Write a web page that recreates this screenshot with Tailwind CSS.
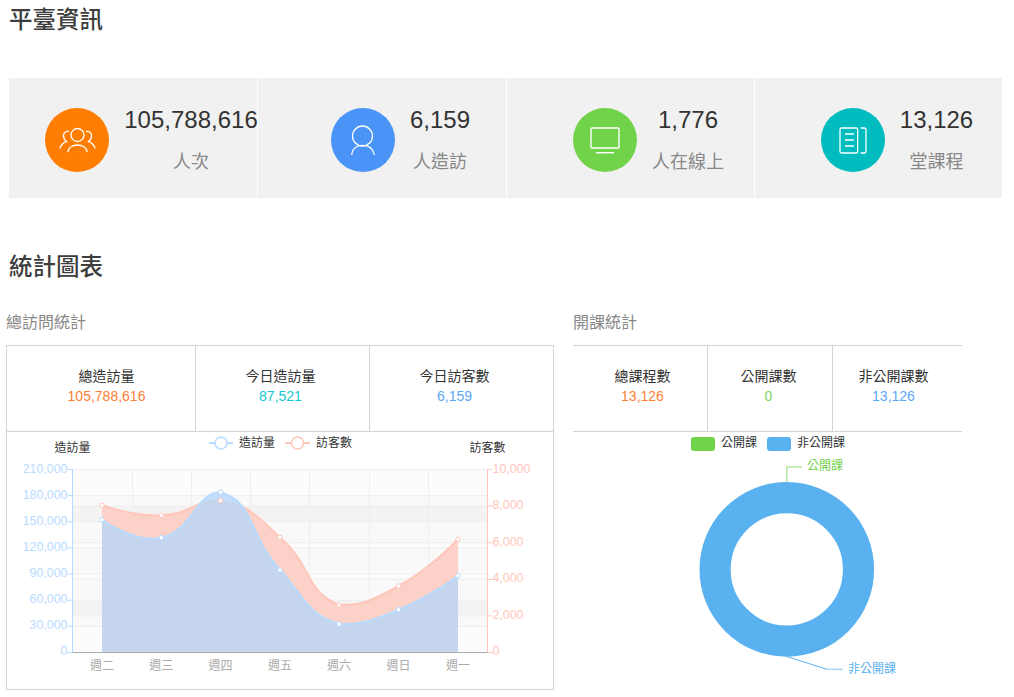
<!DOCTYPE html>
<html lang="zh-Hant">
<head>
<meta charset="utf-8">
<script src="https://cdn.jsdelivr.net/npm/@tailwindcss/browser@4"></script>
<title>平臺資訊</title>
</head>
<body class="bg-white overflow-hidden [font-family:'Liberation_Sans','Noto_Sans_CJK_TC',sans-serif]">
<div class="w-[1014px] h-[697px] overflow-hidden">
  <h2 class="pl-[9px] text-[23.5px] leading-10 font-medium text-[#3d3d3d]">平臺資訊</h2>

  <div class="mt-[38px] ml-[9px] w-[993px] h-[120px] grid grid-cols-[248px_248px_247px_247px] gap-px">
    <div class="bg-[#f1f1f1] flex justify-center items-start pt-[30px] pl-[37px]">
      <div class="w-16 h-16 shrink-0 rounded-full bg-[#ff7d00]">
        <svg viewBox="0 0 64 64" class="w-16 h-16" fill="none" stroke="#fff" stroke-width="1.3" stroke-linecap="round">
          <circle cx="32.5" cy="27" r="6.5"/>
          <path d="M23 43.7C23.5 39.5 27.5 37 32.5 37S41.5 39.5 42 43.7"/>
          <path d="M23.5 23.5C20.5 23 18.5 25 18.5 27.5C18.5 30 19.5 32 21.5 33.5C18 34.5 16 37 15 40"/>
          <path d="M41.5 23.5C44.5 23 46.5 25 46.5 27.5C46.5 30 45.5 32 43.5 33.5C47 34.5 49 37 50 40"/>
        </svg>
      </div>
      <div class="ml-[15px] shrink-0 flex flex-col items-center">
        <div class="text-2xl leading-6 text-[#333]">105,788,616</div>
        <div class="mt-[18px] text-lg leading-6 text-[#888]">人次</div>
      </div>
    </div>
    <div class="bg-[#f1f1f1] flex justify-center items-start pt-[30px] pl-[37px]">
      <div class="w-16 h-16 shrink-0 rounded-full bg-[#4a94f8]">
        <svg viewBox="0 0 64 64" class="w-16 h-16" fill="none" stroke="#fff" stroke-width="1.3" stroke-linecap="round">
          <circle cx="31.5" cy="28" r="10"/>
          <path d="M20.7 46.3C21.5 40.5 26 37.3 31.7 37.3S41.8 40.5 43.3 46.3"/>
        </svg>
      </div>
      <div class="ml-[15px] shrink-0 flex flex-col items-center">
        <div class="text-2xl leading-6 text-[#333]">6,159</div>
        <div class="mt-[18px] text-lg leading-6 text-[#888]">人造訪</div>
      </div>
    </div>
    <div class="bg-[#f1f1f1] flex justify-center items-start pt-[30px] pl-9">
      <div class="w-16 h-16 shrink-0 rounded-full bg-[#71d34a]">
        <svg viewBox="0 0 64 64" class="w-16 h-16" fill="none" stroke="#fff" stroke-width="1.4">
          <rect x="18" y="20" width="28" height="20" rx="1"/>
          <path d="M23 44.7H41"/>
        </svg>
      </div>
      <div class="ml-[15px] shrink-0 flex flex-col items-center">
        <div class="text-2xl leading-6 text-[#333]">1,776</div>
        <div class="mt-[18px] text-lg leading-6 text-[#888]">人在線上</div>
      </div>
    </div>
    <div class="bg-[#f1f1f1] flex justify-center items-start pt-[30px] pl-[37px]">
      <div class="w-16 h-16 shrink-0 rounded-full bg-[#00bcbf]">
        <svg viewBox="0 0 64 64" class="w-16 h-16" fill="none" stroke="#fff" stroke-width="1.3">
          <rect x="19" y="20" width="17.7" height="25" rx="1.5"/>
          <path d="M24 26H33M24 32H33M24 38H33"/>
          <path d="M39.7 20H43a2 2 0 0 1 2 2V43a2 2 0 0 1-2 2H39.7"/>
        </svg>
      </div>
      <div class="ml-[15px] shrink-0 flex flex-col items-center">
        <div class="text-2xl leading-6 text-[#333]">13,126</div>
        <div class="mt-[18px] text-lg leading-6 text-[#888]">堂課程</div>
      </div>
    </div>
  </div>

  <h2 class="mt-[49px] pl-[9px] text-[23.5px] leading-10 font-medium text-[#3d3d3d]">統計圖表</h2>

  <div class="mt-6 flex items-start pl-1.5">
    <section class="w-[548px] shrink-0">
      <h3 class="text-base leading-6 text-[#888]">總訪問統計</h3>
      <div class="mt-2.5 h-[345px] border border-[#d4d4d4]">
        <div class="flex h-[86px] border-b border-[#d4d4d4] text-sm leading-5 text-center">
          <div class="w-[189px] pl-[11px] pt-5 border-r border-[#d4d4d4]"><div class="text-[#333]">總造訪量</div><div class="text-[#ff8033]">105,788,616</div></div>
          <div class="w-[174px] pr-1 pt-5 border-r border-[#d4d4d4]"><div class="text-[#333]">今日造訪量</div><div class="text-[#13c8d0]">87,521</div></div>
          <div class="flex-1 pr-3.5 pt-5"><div class="text-[#333]">今日訪客數</div><div class="text-[#5aa9f7]">6,159</div></div>
        </div>
        <svg viewBox="7 432 546 257" class="block w-[546px] h-[257px] text-xs">
          <!-- legend -->
          <path d="M209 443H233" stroke="#b7daff" stroke-width="2"/>
          <circle cx="221" cy="443" r="6" fill="#fff" stroke="#b7daff" stroke-width="1.5"/>
          <text x="239" y="442.5" dominant-baseline="central" class="fill-[#333]">造訪量</text>
          <path d="M285 443H310" stroke="#ffc6ba" stroke-width="2"/>
          <circle cx="297.5" cy="443" r="6" fill="#fff" stroke="#ffc6ba" stroke-width="1.5"/>
          <text x="316" y="442.5" dominant-baseline="central" class="fill-[#333]">訪客數</text>
          <text x="72.5" y="447.5" text-anchor="middle" dominant-baseline="central" class="fill-[#333]">造訪量</text>
          <text x="487.5" y="447.5" text-anchor="middle" dominant-baseline="central" class="fill-[#333]">訪客數</text>

          <!-- split areas -->
          <g fill="#c8c8c8" fill-opacity=".11">
            <rect x="72.5" y="495.6" width="415" height="26.2"/>
            <rect x="72.5" y="547.9" width="415" height="26.1"/>
            <rect x="72.5" y="600.2" width="415" height="26.1"/>
            <rect x="72.5" y="506.1" width="415" height="36.6"/>
            <rect x="72.5" y="579.3" width="415" height="36.6"/>
          </g>
          <g fill="#f8f8f8" fill-opacity=".35">
            <rect x="72.5" y="469.5" width="415" height="26.1"/>
            <rect x="72.5" y="521.8" width="415" height="26.1"/>
            <rect x="72.5" y="574" width="415" height="26.2"/>
            <rect x="72.5" y="626.3" width="415" height="26.2"/>
            <rect x="72.5" y="469.5" width="415" height="36.6"/>
            <rect x="72.5" y="542.7" width="415" height="36.6"/>
            <rect x="72.5" y="615.9" width="415" height="36.6"/>
          </g>
          <!-- split lines -->
          <path d="M72.5 469.5H487.5M72.5 495.6H487.5M72.5 521.8H487.5M72.5 547.9H487.5M72.5 574H487.5M72.5 600.2H487.5M72.5 626.3H487.5M72.5 506.1H487.5M72.5 542.7H487.5M72.5 579.3H487.5M72.5 615.9H487.5M132.5 469.5V652.5M191.5 469.5V652.5M250.5 469.5V652.5M309.5 469.5V652.5M369.5 469.5V652.5M428.5 469.5V652.5" fill="none" stroke="#eeeeee"/>

          <!-- visitors series -->
          <path d="M102 505.3C102 505.3 131.9 516.4 161.3 515.3C191.2 514.1 192.9 500.7 220.6 500.7C252.2 506.6 254.1 514.5 280 537.3C313.3 566.7 304.1 590.7 339 605C363.4 605 371.6 600.9 398.6 586C431.1 568 458 539.3 458 539.3V652.5H102Z" fill="#fcd1c7"/>
          <path d="M102 505.3C102 505.3 131.9 516.4 161.3 515.3C191.2 514.1 192.9 500.7 220.6 500.7C252.2 506.6 254.1 514.5 280 537.3C313.3 566.7 304.1 590.7 339 605C363.4 605 371.6 600.9 398.6 586C431.1 568 458 539.3 458 539.3" fill="none" stroke="#ffc6ba" stroke-width="2"/>
          <!-- views series -->
          <path d="M102 519.7C102 519.7 134.4 543.9 161.3 537.7C193.7 530.2 194.9 492.3 220.6 492.3C254.3 501.5 247.4 533.8 280 570C306.6 599.6 305.4 612.8 339 624C364.7 624 370.5 621.1 398.6 609.7C430 597 458 575.7 458 575.7V652.5H102Z" fill="#b7d6f8" fill-opacity=".8"/>
          <path d="M102 519.7C102 519.7 134.4 543.9 161.3 537.7C193.7 530.2 194.9 492.3 220.6 492.3C254.3 501.5 247.4 533.8 280 570C306.6 599.6 305.4 612.8 339 624C364.7 624 370.5 621.1 398.6 609.7C430 597 458 575.7 458 575.7" fill="none" stroke="#b7daff" stroke-width="2"/>
          <!-- points -->
          <g fill="#fff" stroke="#ffc6ba">
            <circle cx="102" cy="505.3" r="2.2"/><circle cx="161.3" cy="515.3" r="2.2"/><circle cx="220.6" cy="500.7" r="2.2"/><circle cx="280" cy="537.3" r="2.2"/><circle cx="339" cy="605" r="2.2"/><circle cx="398.6" cy="586" r="2.2"/><circle cx="458" cy="539.3" r="2.2"/>
          </g>
          <g fill="#fff" stroke="#b7daff">
            <circle cx="102" cy="519.7" r="2.2"/><circle cx="161.3" cy="537.7" r="2.2"/><circle cx="220.6" cy="492.3" r="2.2"/><circle cx="280" cy="570" r="2.2"/><circle cx="339" cy="624" r="2.2"/><circle cx="398.6" cy="609.7" r="2.2"/><circle cx="458" cy="575.7" r="2.2"/>
          </g>

          <!-- axes -->
          <path d="M72.5 469V652.5M67.5 469.5H72.5M67.5 495.6H72.5M67.5 521.8H72.5M67.5 547.9H72.5M67.5 574H72.5M67.5 600.2H72.5M67.5 626.3H72.5M67.5 652.5H72.5" fill="none" stroke="#b7daff"/>
          <path d="M487.5 469V652.5M487.5 469.5H492.5M487.5 506.1H492.5M487.5 542.7H492.5M487.5 579.3H492.5M487.5 615.9H492.5M487.5 652.5H492.5" fill="none" stroke="#ffc6ba"/>
          <path d="M72.5 652.5H487.5" stroke="#aaaaaa"/>

          <g text-anchor="end" class="fill-[#b7daff] text-[12.4px]">
            <text x="67.5" y="469" dominant-baseline="central">210,000</text>
            <text x="67.5" y="495" dominant-baseline="central">180,000</text>
            <text x="67.5" y="521" dominant-baseline="central">150,000</text>
            <text x="67.5" y="547" dominant-baseline="central">120,000</text>
            <text x="67.5" y="573" dominant-baseline="central">90,000</text>
            <text x="67.5" y="599" dominant-baseline="central">60,000</text>
            <text x="67.5" y="625" dominant-baseline="central">30,000</text>
            <text x="67.5" y="651" dominant-baseline="central">0</text>
          </g>
          <g class="fill-[#ffc6ba] text-[12.4px]">
            <text x="492.5" y="468.5" dominant-baseline="central">10,000</text>
            <text x="492.5" y="505" dominant-baseline="central">8,000</text>
            <text x="492.5" y="541.5" dominant-baseline="central">6,000</text>
            <text x="492.5" y="578" dominant-baseline="central">4,000</text>
            <text x="492.5" y="614.5" dominant-baseline="central">2,000</text>
            <text x="492.5" y="651" dominant-baseline="central">0</text>
          </g>
          <g text-anchor="middle" class="fill-[#aaaaaa]">
            <text x="102" y="665.5" dominant-baseline="central">週二</text>
            <text x="161.3" y="665.5" dominant-baseline="central">週三</text>
            <text x="220.6" y="665.5" dominant-baseline="central">週四</text>
            <text x="280" y="665.5" dominant-baseline="central">週五</text>
            <text x="339" y="665.5" dominant-baseline="central">週六</text>
            <text x="398.6" y="665.5" dominant-baseline="central">週日</text>
            <text x="458" y="665.5" dominant-baseline="central">週一</text>
          </g>
        </svg>
      </div>
    </section>

    <section class="ml-[19px] w-[389px] shrink-0">
      <h3 class="text-base leading-6 text-[#888]">開課統計</h3>
      <div class="mt-2.5 border-t border-[#d4d4d4]">
        <div class="flex h-[86px] border-b border-[#d4d4d4] text-sm leading-5 text-center">
          <div class="w-[135px] pl-[5px] pt-5 border-r border-[#d4d4d4]"><div class="text-[#333]">總課程數</div><div class="text-[#ff8033]">13,126</div></div>
          <div class="w-[125px] pr-[3px] pt-5 border-r border-[#d4d4d4]"><div class="text-[#333]">公開課數</div><div class="text-[#80d460]">0</div></div>
          <div class="flex-1 pr-2 pt-5"><div class="text-[#333]">非公開課數</div><div class="text-[#5aa9f7]">13,126</div></div>
        </div>
        <svg viewBox="573 432 389 257" class="block w-[389px] h-[257px] text-xs">
          <rect x="691" y="437" width="24" height="14" rx="3" fill="#71d34a"/>
          <text x="721" y="443" dominant-baseline="central" class="fill-[#333]">公開課</text>
          <rect x="767" y="437" width="24" height="14" rx="3" fill="#5ab1ef"/>
          <text x="797" y="443" dominant-baseline="central" class="fill-[#333]">非公開課</text>
          <circle cx="786.8" cy="569.4" r="71.7" fill="none" stroke="#5ab1ef" stroke-width="31.2"/>
          <path d="M786.8 482V467H802" fill="none" stroke="#b5e8a0" stroke-width="1.5"/>
          <text x="807" y="466" dominant-baseline="central" class="fill-[#71d34a]">公開課</text>
          <path d="M786.8 656.5L827 669.3" fill="none" stroke="#5ab1ef"/>
          <path d="M827 669.3H843" fill="none" stroke="#a8d8fb" stroke-width="1.5"/>
          <text x="848" y="669" dominant-baseline="central" class="fill-[#5ab1ef]">非公開課</text>
        </svg>
      </div>
    </section>
  </div>
</div>
</body>
</html>
